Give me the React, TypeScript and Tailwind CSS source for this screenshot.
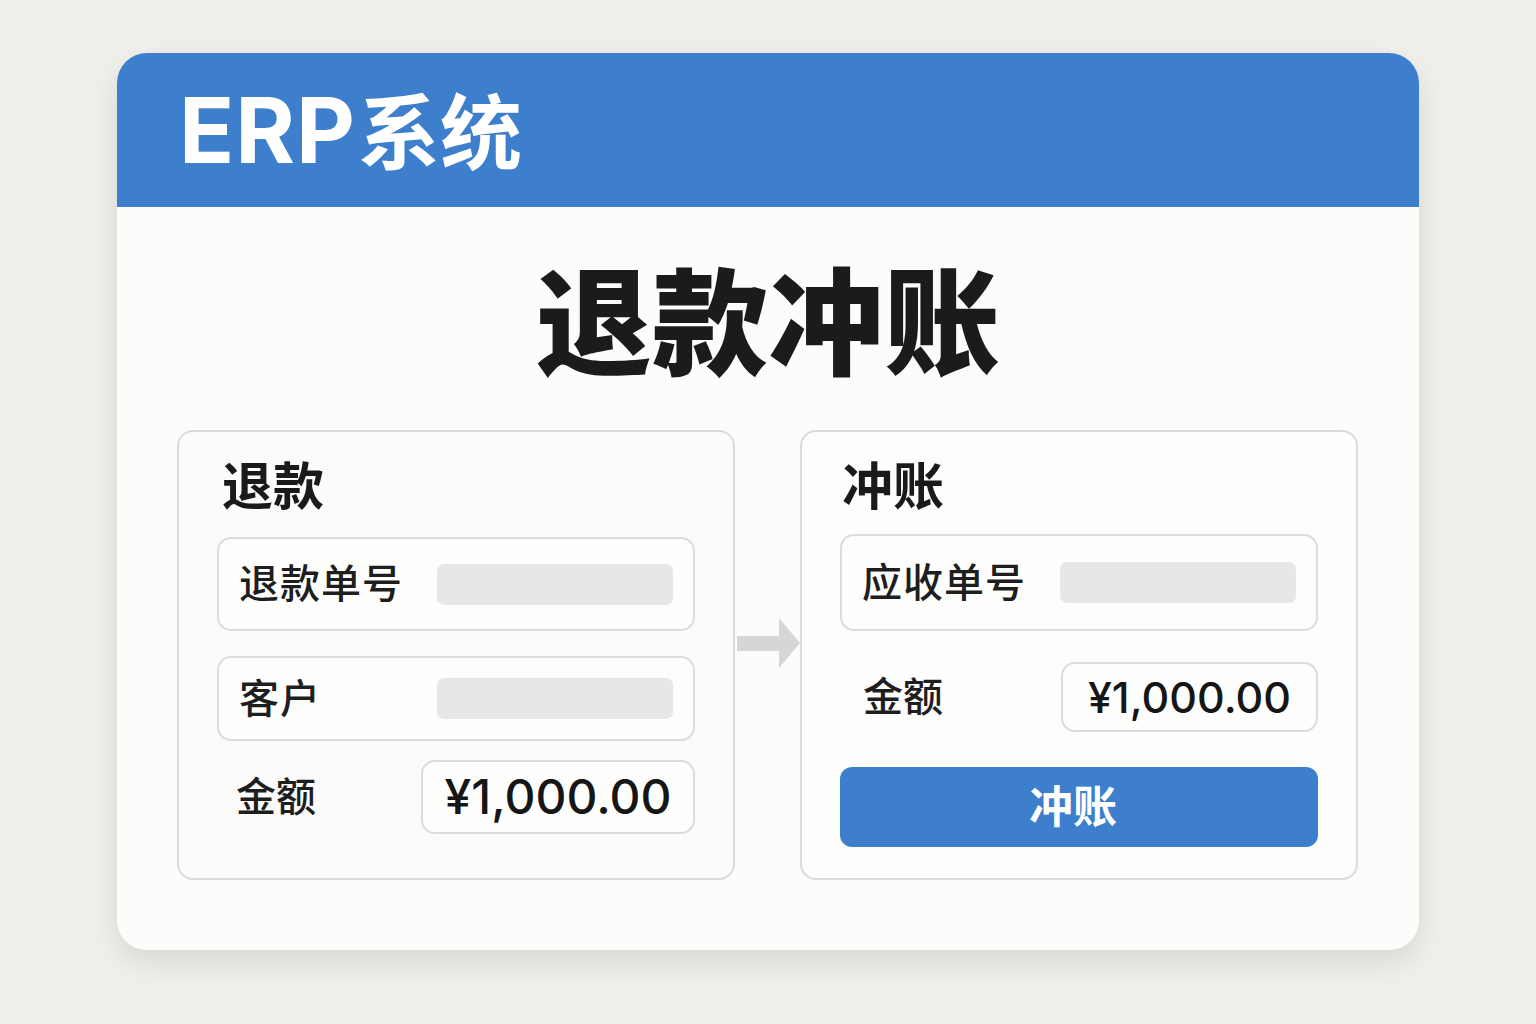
import React from 'react';

const font = { fontFamily: 'Inter, "Noto Sans CJK SC", sans-serif' };

function Field({ label }: { label: string }) {
  return (
    <div className="flex items-center justify-between rounded-[14px] border-2 border-[#dcdcdc] bg-[#fdfdfc] pl-[20px] pr-[20px]">
      <span className="text-[40px] font-medium leading-none tracking-[1px] text-[#1e1e1e]">{label}</span>
      <div className="h-[41px] w-[236px] rounded-[7px] bg-[#e7e7e6]" />
    </div>
  );
}

function Amount({ box, size, pl }: { box: string; size: string; pl: string }) {
  return (
    <div className="flex items-center justify-between">
      <span className={`${pl} text-[40px] font-medium leading-none text-[#1e1e1e]`}>金额</span>
      <div className={`${box} flex items-center justify-center rounded-[14px] border-2 border-[#dcdcdc] bg-[#fefefd]`}>
        <span className={`${size} font-medium leading-none text-[#161616]`}>¥1,000.00</span>
      </div>
    </div>
  );
}

export default function App() {
  return (
    <div className="min-h-screen bg-[#f1efeb] pt-[53px]" style={font}>
      <div className="mx-auto h-[897px] w-[1302px] overflow-hidden rounded-[30px] bg-[#fcfcfa] shadow-[0_12px_30px_rgba(0,0,0,0.10)]">
        <div className="flex h-[154px] items-center bg-[#3d7fcc] pl-[62px]">
          <h1 className="flex items-baseline font-bold leading-none text-white">
            <span className="text-[91px] tracking-[1px]">ERP</span>
            <span className="ml-[2px] text-[82px]">系统</span>
          </h1>
        </div>

        <div className="px-[60px]">
          <h2 className="mt-[59px] text-center text-[116px] font-black leading-none text-[#1b1b1b]">退款冲账</h2>

          <div className="mt-[48px] flex">
            {/* 退款 */}
            <div className="flex h-[450px] w-[558px] flex-col rounded-[16px] border-2 border-[#dadad9] bg-[#fbfbfa] px-[38px] pt-[29px]">
              <h3 className="pl-[5px] text-[51px] font-bold leading-none text-[#1a1a1a]">退款</h3>
              <div className="mt-[25px] flex h-[94px] flex-col justify-center [&>div]:h-full">
                <Field label="退款单号" />
              </div>
              <div className="mt-[25px] flex h-[85px] flex-col justify-center [&>div]:h-full">
                <Field label="客户" />
              </div>
              <div className="mt-[19px]">
                <Amount box="h-[74px] w-[274px]" size="text-[48px]" pl="pl-[19px]" />
              </div>
            </div>

            {/* arrow */}
            <div className="flex w-[65px] items-center justify-center pb-[24px]">
              <svg width="65" height="50" viewBox="0 0 65 50">
                <rect x="2" y="18" width="44" height="15" fill="#d6d6d5" />
                <polygon points="44,0 65,25 44,50" fill="#d6d6d5" />
              </svg>
            </div>

            {/* 冲账 */}
            <div className="flex h-[450px] w-[558px] flex-col rounded-[16px] border-2 border-[#dadad9] bg-[#fdfdfc] px-[38px] pt-[29px]">
              <h3 className="pl-[2px] text-[51px] font-bold leading-none text-[#1a1a1a]">冲账</h3>
              <div className="mt-[22px] flex h-[97px] flex-col justify-center [&>div]:h-full">
                <Field label="应收单号" />
              </div>
              <div className="mt-[31px]">
                <Amount box="h-[70px] w-[257px]" size="text-[43px]" pl="pl-[23px]" />
              </div>
              <button className="mt-[35px] flex h-[80px] w-full items-center justify-center rounded-[12px] bg-[#3d7fcc] pr-[12px] text-[44px] font-bold leading-none text-white">
                冲账
              </button>
            </div>
          </div>
        </div>
      </div>
    </div>
  );
}
